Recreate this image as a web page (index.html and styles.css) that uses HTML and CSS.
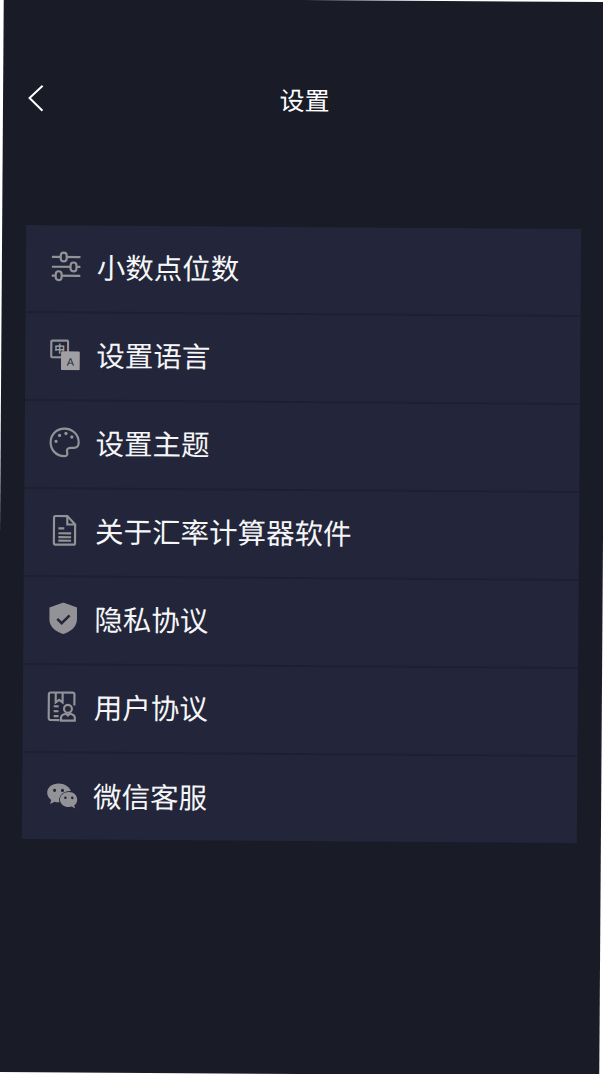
FILE: index.html
```html
<!DOCTYPE html>
<html lang="zh-CN">
<head>
<meta charset="utf-8">
<title>设置</title>
<link rel="stylesheet" href="styles.css">
</head>
<body>
<main class="screen">
  <header class="topbar">
    <svg class="back" viewBox="0 0 18 28" aria-hidden="true"><path d="M15.500 1.500 2.500 14l13 12.500"/></svg>
    <h1 class="title">设置</h1>
  </header>
  <ul class="menu">
    <li class="row">
      <svg class="icon" viewBox="0 0 32 32" aria-hidden="true">
        <g class="line">
          <path d="M2 6.500h29M2 16.500h29M2 25.500h29"/>
        </g>
        <g class="knob">
          <rect x="11" y="2" width="6" height="9" rx="3"/>
          <rect x="21" y="12" width="6" height="9" rx="3"/>
          <rect x="6" y="21" width="6" height="9" rx="3"/>
        </g>
      </svg>
      <span class="label">小数点位数</span>
    </li>
    <li class="row">
      <svg class="icon" viewBox="0 0 32 32" aria-hidden="true">
        <rect class="line" x="2" y="2" width="17" height="17" rx="1"/>
        <text class="glyph-zh" x="10.500" y="14.500">中</text>
        <rect class="solid-light" x="12" y="13" width="19" height="19" rx="1"/>
        <text class="glyph-a" x="21.500" y="27.500">A</text>
      </svg>
      <span class="label">设置语言</span>
    </li>
    <li class="row">
      <svg class="icon" viewBox="0 0 32 32" aria-hidden="true">
        <path class="line" d="M16 2C8 2 2 8 2 16s6 14 14 14c3 0 3.500-2 2.800-4-.8-2.500.5-4.500 3.200-4.500h3.500c3 0 5-2 5-5.500C30.500 8 24 2 16 2Z"/>
        <g class="dot">
          <circle cx="7.500" cy="15" r="1.700"/>
          <circle cx="11" cy="9" r="1.700"/>
          <circle cx="17.500" cy="7" r="1.700"/>
          <circle cx="23.500" cy="10.500" r="1.700"/>
        </g>
      </svg>
      <span class="label">设置主题</span>
    </li>
    <li class="row">
      <svg class="icon" viewBox="0 0 32 32" aria-hidden="true">
        <path class="line" d="M7.500 1.500h12l8 8.500v19a1.500 1.500 0 0 1-1.500 1.500H7.500A1.500 1.500 0 0 1 6 29V3a1.500 1.500 0 0 1 1.500-1.500Z"/>
        <path class="line" d="M19.500 1.500V10h8M10.500 14h6M10.500 19h13M10.500 23h13M10.500 26.500h13"/>
      </svg>
      <span class="label">关于汇率计算器软件</span>
    </li>
    <li class="row">
      <svg class="icon" viewBox="0 0 32 32" aria-hidden="true">
        <path class="solid" d="M16 0 30 5v12c0 8-7 12.500-14 15C9 29.500 2 25 2 17V5Z"/>
        <path class="check" d="m10 16.500 4.500 4.500 8-8"/>
      </svg>
      <span class="label">隐私协议</span>
    </li>
    <li class="row">
      <svg class="icon" viewBox="0 0 32 32" aria-hidden="true">
        <path class="line" d="M13 30H4a2 2 0 0 1-2-2V4a2 2 0 0 1 2-2h22a2 2 0 0 1 2 2v11"/>
        <path class="line" d="M9 2v10l3.500-2.500L16 12V2M7 16h5M7 21h5M7 26h5"/>
        <circle class="line" cx="21.500" cy="18.500" r="4"/>
        <path class="line" d="M14.500 30.500v-3c0-2 2.500-3.500 5-4l2 1.800 2-1.800c2.500.5 5 2 5 4v3Z"/>
      </svg>
      <span class="label">用户协议</span>
    </li>
    <li class="row">
      <svg class="icon" viewBox="0 0 32 32" aria-hidden="true">
        <path class="solid" d="M12.500 4C6 4 1 8 1 13.500c0 3 1.600 5.500 4.200 7.300L4 25l4.500-2.500c1.200.4 2.600.6 4 .6h1a9 9 0 0 1-.3-2.300c0-5.300 5-9.300 11-9.300h.8C23.600 7.300 18.500 4 12.500 4Z"/>
        <path class="solid" d="M23 12.500c-5 0-9 3.400-9 7.700s4 7.700 9 7.700c1 0 2-.2 3-.5l3.500 2-1-3.300c2.300-1.400 3-3.500 3-5.900 0-4.300-3.400-7.700-8.500-7.700Z"/>
        <g class="hole">
          <circle cx="8.500" cy="11" r="1.600"/>
          <circle cx="16.500" cy="11" r="1.600"/>
          <circle cx="19.500" cy="18.500" r="1.300"/>
          <circle cx="26.500" cy="18.500" r="1.300"/>
        </g>
      </svg>
      <span class="label">微信客服</span>
    </li>
  </ul>
</main>
</body>
</html>
```

FILE: styles.css
```css
* {
  box-sizing: border-box;
}

html,
body {
  margin: 0;
  height: 100%;
  overflow: hidden;
  background: #fff;
}

body {
  font-family: "Noto Sans CJK SC", "Noto Sans", sans-serif;
}

.screen {
  width: 603px;
  height: 1074px;
  background: #191b27;
  color: #fff;
  transform: rotate(0.4deg);
  transform-origin: 50% 50%;
  display: flex;
  flex-direction: column;
  padding-top: 85px;
}

.topbar {
  height: 30px;
  margin-bottom: 112px;
  padding-left: 24px;
  display: grid;
  grid-template-columns: 1fr;
  align-items: center;
  position: relative;
}

.back {
  width: 18px;
  height: 28px;
  fill: none;
  stroke: #fff;
  stroke-width: 2;
}

.title {
  position: absolute;
  left: 0;
  right: 0;
  top: -1px;
  margin: 0;
  text-align: center;
  font-size: 25px;
  font-weight: 400;
  line-height: 30px;
}

.menu {
  list-style: none;
  margin: 0 24px;
  padding: 0;
  background: #23263a;
}

.row {
  height: 88px;
  padding: 0 0 4px 24px;
  display: flex;
  align-items: center;
  gap: 15.500px;
  border-bottom: 2px solid #1e2031;
}

.row:last-child {
  height: 86px;
  padding-bottom: 2px;
  border-bottom: 0;
}

.icon {
  width: 31.500px;
  height: 32px;
  flex: none;
}

.label {
  font-size: 28.500px;
  line-height: 40px;
  font-weight: 400;
  color: #f6f6f8;
}

.line {
  fill: none;
  stroke: #929297;
  stroke-width: 2.200;
}

.knob rect {
  fill: #23263a;
  stroke: #929297;
  stroke-width: 2.200;
}

.dot circle {
  fill: #929297;
}

.solid {
  fill: #929297;
}

.solid-light {
  fill: #a0a0a4;
}

.check {
  fill: none;
  stroke: #23263a;
  stroke-width: 2.600;
}

.hole circle {
  fill: #23263a;
}

.glyph-zh,
.glyph-a {
  text-anchor: middle;
  font-size: 11px;
}

.glyph-zh {
  fill: #a0a0a4;
  font-weight: 700;
}

.glyph-a {
  fill: #23263a;
  font-family: "Liberation Sans", sans-serif;
}
```
